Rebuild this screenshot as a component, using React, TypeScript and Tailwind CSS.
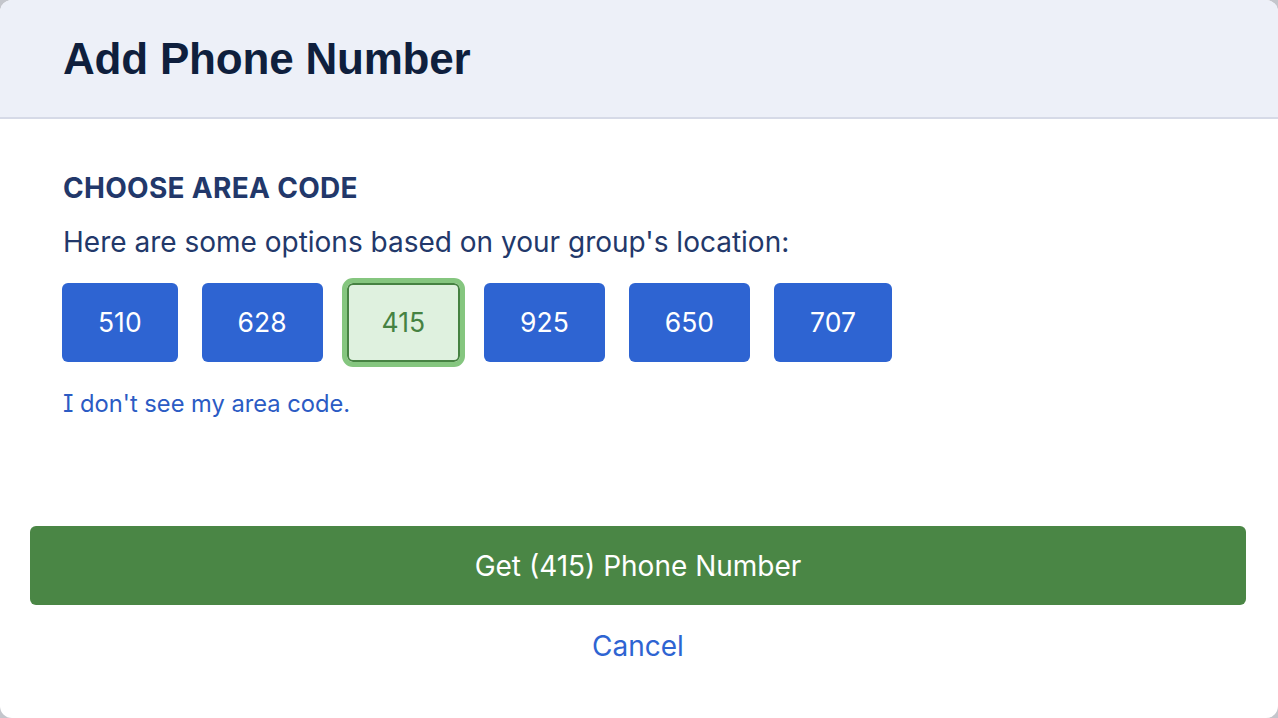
import React, { useState } from 'react';

const AREA_CODES = ['510', '628', '415', '925', '650', '707'];

export default function App() {
  const [selected, setSelected] = useState('415');

  return (
    <div className="h-screen w-full bg-[#c4c6cc]">
      <div
        className="flex h-full w-full flex-col overflow-hidden rounded-[12px] bg-white"
        style={{ fontFamily: 'Inter, "Noto Sans", sans-serif' }}
      >
        {/* Header */}
        <div className="flex h-[119px] shrink-0 items-center border-b-2 border-[#d6dae7] bg-[#edf0f8] px-[63px]">
          <h1 className="font-['Liberation_Sans',Arial,sans-serif] text-[44px] font-bold tracking-[-0.2px] text-[#0f1f3d]">
            Add Phone Number
          </h1>
        </div>

        {/* Body */}
        <div className="flex flex-1 flex-col px-[63px] pt-[52px]">
          <h2 className="text-[28px] leading-[34px] font-bold tracking-[0.3px] text-[#22386a]">CHOOSE AREA CODE</h2>
          <p className="mt-[20px] text-[28px] leading-[34px] text-[#22386a] [font-feature-settings:'cv08']">
            Here are some options based on your group's location:
          </p>

          <div className="-ml-px mt-[24px] flex gap-[24px]">
            {AREA_CODES.map((code) =>
              code === selected ? (
                <button
                  key={code}
                  onClick={() => setSelected(code)}
                  className="h-[79px] rounded-[6px] border-2 border-[#468242] bg-[#dff1df] px-[33px] text-[26.5px] text-[#468242] outline-[5px] outline-[#85c67f] outline-solid"
                >
                  {code}
                </button>
              ) : (
                <button
                  key={code}
                  onClick={() => setSelected(code)}
                  className="h-[79px] rounded-[6px] bg-[#2e64d2] px-[36px] text-[26.5px] text-white"
                >
                  {code}
                </button>
              )
            )}
          </div>

          <a href="#" className="mt-[27px] self-start text-[23.7px] leading-[30px] text-[#2b5bc4] [font-feature-settings:'cv08']">
            I don't see my area code.
          </a>

          <div className="mt-auto mb-[55px] -ml-[33px] -mr-[31px] flex flex-col items-center">
            <button className="h-[79px] w-full rounded-[6px] bg-[#4a8645] text-[28px] text-white">
              Get ({selected}) Phone Number
            </button>
            <button className="mt-[24px] text-[28px] leading-[34px] text-[#2e64d2]">Cancel</button>
          </div>
        </div>
      </div>
    </div>
  );
}
